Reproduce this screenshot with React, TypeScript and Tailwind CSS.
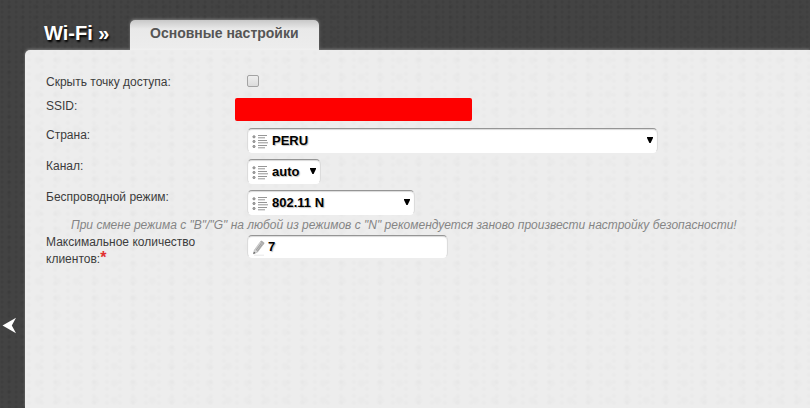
import React, { useState } from "react";

const paper =
  "bg-[#ededed] bg-[radial-gradient(circle_at_30%_40%,rgba(0,0,0,0.012)_0_1px,transparent_3px),radial-gradient(circle_at_70%_60%,rgba(0,0,0,0.01)_0_2px,transparent_5px)] bg-[size:13px_7px,19px_17px]";

const darkPaper =
  "bg-[#434343] bg-[radial-gradient(circle_at_30%_40%,rgba(0,0,0,0.06)_0_1px,transparent_2px),radial-gradient(circle_at_70%_60%,rgba(0,0,0,0.05)_0_1px,transparent_3px)] bg-[size:7px_5px,13px_11px]";

const field =
  "w-full appearance-none rounded-[5px] border border-x-[#dcdcdc] border-t-[#959595] border-b-white bg-white text-[13px] font-bold text-black shadow-[inset_0_1px_1px_rgba(0,0,0,0.15)] outline-none focus-visible:ring-1 focus-visible:ring-gray-500 [text-shadow:1px_1px_1px_rgba(0,0,0,0.25)]";

function ListIcon() {
  return (
    <svg
      aria-hidden="true"
      viewBox="0 0 16 14"
      className="pointer-events-none absolute top-[7px] left-[5px] h-[14px] w-4"
      fill="none"
      stroke="#8a8a8a"
    >
      <g fill="#aaa">
        <circle cx="2" cy="1.8" r="1.1" />
        <circle cx="2" cy="6.5" r="1.1" />
        <circle cx="2" cy="11.5" r="1.1" />
      </g>
      <path d="M6 .5h9M6 2.8h7M6 5.5h9M6 7.8h10M6 10.5h9M6 12.8h7" strokeWidth="0.9" />
    </svg>
  );
}

function PencilIcon() {
  return (
    <svg
      aria-hidden="true"
      viewBox="0 0 14 16"
      className="pointer-events-none absolute top-[5px] left-[5px] h-4 w-[14px]"
    >
      <path d="M2.4 10 8.5 1.6 11.6 4 5.4 12.2 1.5 13.8z" fill="#d8d8d8" stroke="#b0b0b0" strokeWidth="0.6" />
      <path d="M4 10.4 9.4 3.2M5.2 11.3 10.5 4.1" stroke="#a2a2a2" strokeWidth="1.1" />
      <path d="M8.2 1.8 9.6.5l3 2.4-1.1 1.5z" fill="#aaa" />
      <path d="M1.3 14 1.9 11.8 3.5 13.1z" fill="#555" />
      <path d="M2 15.2h10" stroke="#e2e2e2" strokeWidth="0.8" />
    </svg>
  );
}

interface FormRowProps {
  id: string;
  label: string;
  required?: boolean;
  className: string;
  children: React.ReactNode;
}

function FormRow({ id, label, required, className, children }: FormRowProps) {
  return (
    <div className={`flex items-start ${className}`}>
      <label htmlFor={id} className="w-[201px] shrink-0 pr-4">
        {label}
        {required && (
          <span className="text-base leading-[0px] font-bold text-[#e23030]">*</span>
        )}
      </label>
      {children}
    </div>
  );
}

interface SelectFieldProps {
  id: string;
  options: string[];
  className: string;
}

function SelectField({ id, options, className }: SelectFieldProps) {
  const [value, setValue] = useState(options[0]);

  return (
    <div className={`relative mt-px ${className}`}>
      <select
        id={id}
        value={value}
        onChange={(event) => setValue(event.target.value)}
        className={`block h-[25px] pr-4 pl-6 ${field}`}
      >
        {options.map((option) => (
          <option key={option}>{option}</option>
        ))}
      </select>
      <ListIcon />
      <svg
        aria-hidden="true"
        viewBox="0 0 6 6"
        className="pointer-events-none absolute top-[9px] right-[5px] h-[6px] w-[6px]"
      >
        <path d="M0 0h6v1L3.6 6H2.4L0 1z" fill="#000" />
      </svg>
    </div>
  );
}

export default function App() {
  const [hidden, setHidden] = useState(false);
  const [clients, setClients] = useState("7");

  return (
    <div
      className={`flex min-h-screen font-['Liberation_Sans',Arial,sans-serif] text-xs leading-[17px] text-[#3c3c3c] ${darkPaper}`}
    >
      <aside className="w-[25px] shrink-0">
        <button
          type="button"
          aria-label="Свернуть меню"
          className="sticky top-[317px] mt-[317px] ml-0.5 block"
        >
          <svg viewBox="0 0 15 17" className="block h-[17px] w-[15px]">
            <path d="M.5 8.5 14 .8 9.8 8.5 14 16.2z" fill="#fff" />
          </svg>
        </button>
      </aside>

      <div className="flex min-w-0 grow flex-col">
        <header className="flex h-[50px] shrink-0 items-end">
          <h1 className="w-[105px] shrink-0 pb-1 pl-[19px] text-xl leading-[26px] font-bold whitespace-nowrap text-white [text-shadow:1px_2px_2px_#000]">
            Wi-Fi »
          </h1>
          <nav>
            <a
              href="#basic"
              aria-current="page"
              className="block h-[30px] rounded-t-[5px] bg-linear-to-b from-[#c8c8c8] via-[#e9e9e9] via-30% to-[#ededed] px-5 text-sm leading-[27px] font-bold text-[#555] shadow-[0_-1px_3px_rgba(255,255,255,0.3)]"
            >
              Основные настройки
            </a>
          </nav>
        </header>

        <main
          className={`grow rounded-tl-[5px] pt-6 pl-[21px] shadow-[0_-1px_3px_rgba(255,255,255,0.3)] ${paper}`}
        >
          <form onSubmit={(event) => event.preventDefault()}>
            <FormRow id="hide-ap" label="Скрыть точку доступа:" className="h-6">
              <input
                id="hide-ap"
                type="checkbox"
                checked={hidden}
                onChange={(event) => setHidden(event.target.checked)}
                className="mt-px h-3 w-3 appearance-none rounded-[2px] border border-[#a3a3a3] bg-linear-to-b from-[#eee] to-[#dcdcdc] checked:bg-[#666]"
              />
            </FormRow>
            <FormRow id="ssid" label="SSID:" className="h-[29px]">
              <input
                id="ssid"
                type="text"
                readOnly
                className="-ml-3 block h-[23px] w-[237px] rounded-[2px] bg-[#fe0000] outline-none"
              />
            </FormRow>
            <FormRow id="country" label="Страна:" className="h-[31px]">
              <SelectField id="country" options={["PERU"]} className="w-[411px]" />
            </FormRow>
            <FormRow id="channel" label="Канал:" className="h-[31px]">
              <SelectField id="channel" options={["auto"]} className="w-[74px]" />
            </FormRow>
            <FormRow id="mode" label="Беспроводной режим:" className="h-7">
              <SelectField id="mode" options={["802.11 N"]} className="w-[168px]" />
            </FormRow>
            <p className="pl-[25px] text-[#858585] italic">
              При смене режима с "B"/"G" на любой из режимов с "N" рекомендуется
              заново произвести настройку безопасности!
            </p>
            <FormRow
              id="clients"
              label="Максимальное количество клиентов:"
              required
              className="min-h-[34px]"
            >
              <div className="relative mt-px w-[201px]">
                <input
                  id="clients"
                  type="text"
                  required
                  value={clients}
                  onChange={(event) => setClients(event.target.value)}
                  className={`block h-[23px] pr-2 pl-5 ${field}`}
                />
                <PencilIcon />
              </div>
            </FormRow>
          </form>
        </main>
      </div>
    </div>
  );
}
